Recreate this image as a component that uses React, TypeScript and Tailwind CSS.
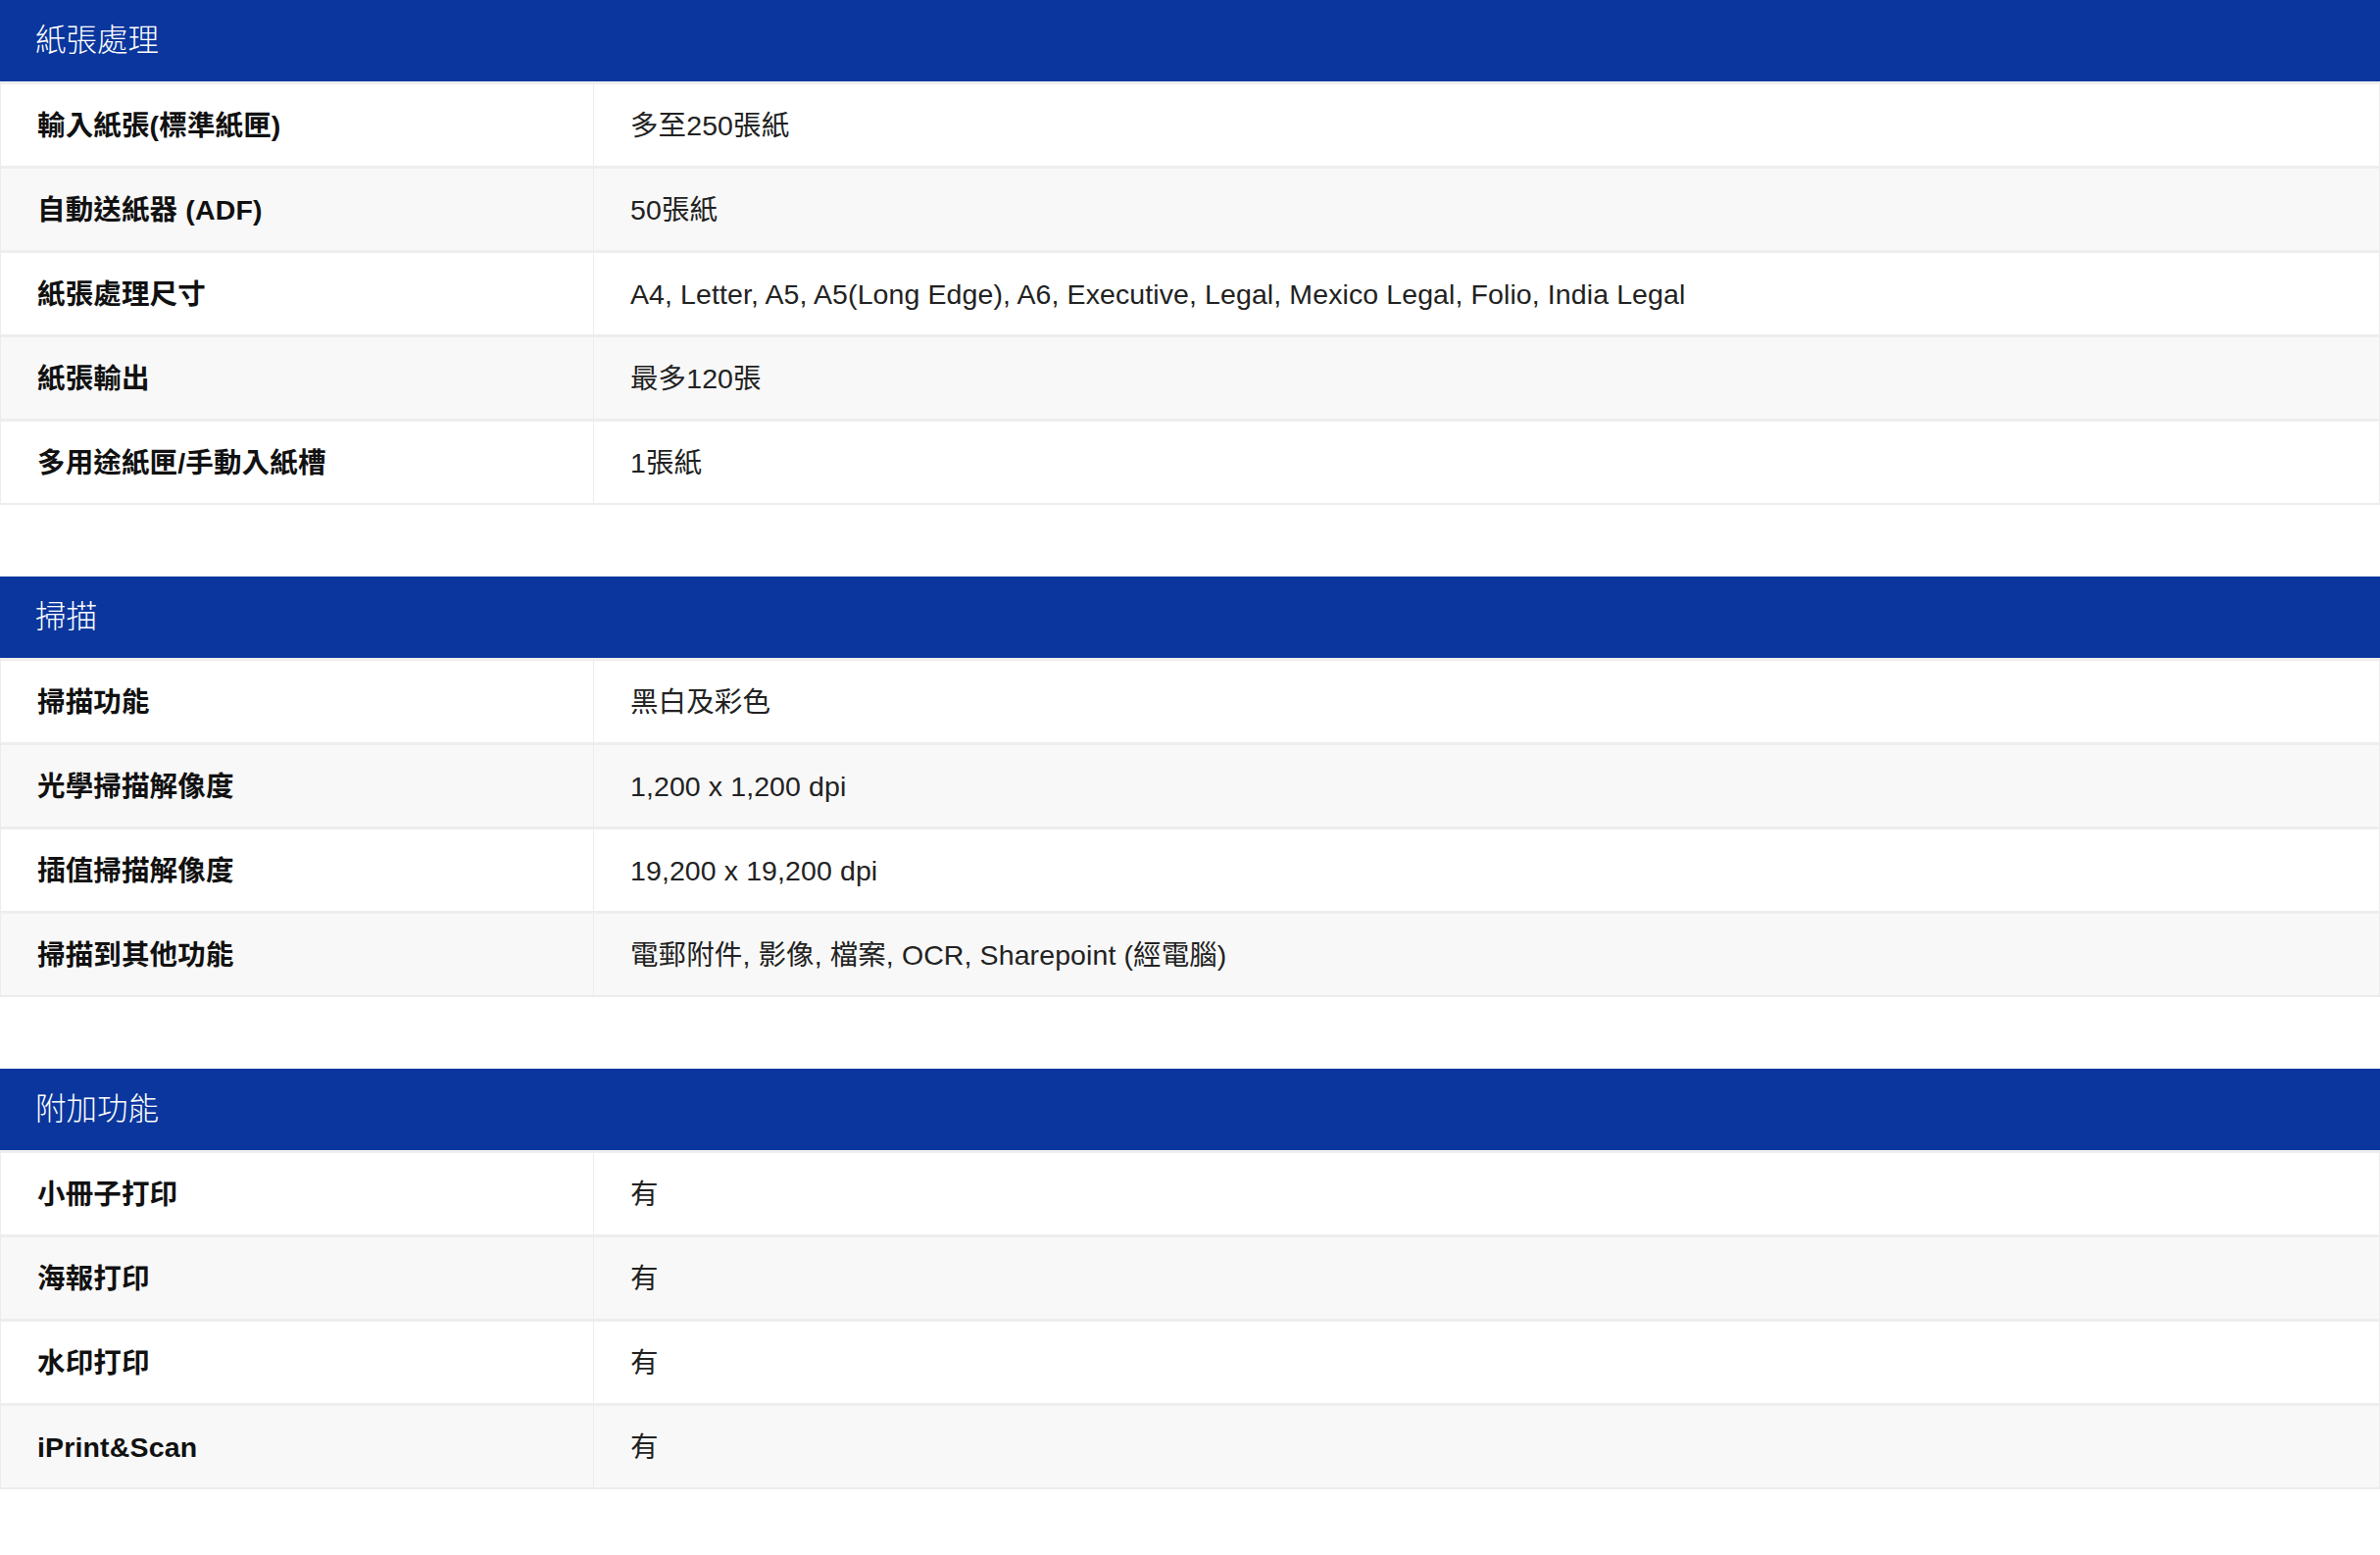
const sections = [
  {
    title: '紙張處理',
    rows: [
      ['輸入紙張(標準紙匣)', '多至250張紙'],
      ['自動送紙器 (ADF)', '50張紙'],
      ['紙張處理尺寸', 'A4, Letter, A5, A5(Long Edge), A6, Executive, Legal, Mexico Legal, Folio, India Legal'],
      ['紙張輸出', '最多120張'],
      ['多用途紙匣/手動入紙槽', '1張紙'],
    ],
  },
  {
    title: '掃描',
    rows: [
      ['掃描功能', '黑白及彩色'],
      ['光學掃描解像度', '1,200 x 1,200 dpi'],
      ['插值掃描解像度', '19,200 x 19,200 dpi'],
      ['掃描到其他功能', '電郵附件, 影像, 檔案, OCR, Sharepoint (經電腦)'],
    ],
  },
  {
    title: '附加功能',
    rows: [
      ['小冊子打印', '有'],
      ['海報打印', '有'],
      ['水印打印', '有'],
      ['iPrint&Scan', '有'],
    ],
  },
]

export default function App() {
  return (
    <main className="min-h-screen bg-white font-['Liberation_Sans','Noto_Sans_CJK_TC',sans-serif] text-[#1c1c1c]">
      {sections.map((section, i) => (
        <section key={i} className={i > 0 ? 'mt-[73px]' : ''}>
          {/* section header */}
          <div className="h-[83px] bg-[#0a369d] flex items-center pl-[36px] text-[31.5px] font-light text-white">
            {section.title}
          </div>

          <div className="border-l border-r border-b-2 border-[#ececec]">
            {section.rows.map(([label, value], idx) => (
              <div
                key={idx}
                className={`grid grid-cols-[605px_1fr] h-[86px] border-t-[3px] border-[#eeeeee] ${
                  idx % 2 === 1 ? 'bg-[#f8f8f8]' : 'bg-white'
                }`}
              >
                <div className="flex items-center pt-[2px] pl-[37px] border-r border-[#ececec] text-[28.5px] tracking-[0.15px] font-bold text-[#111]">
                  {label}
                </div>
                <div className="flex items-center pt-[2px] pl-[37px] text-[28.5px] tracking-[0.1px] text-[#222]">
                  {value}
                </div>
              </div>
            ))}
          </div>
        </section>
      ))}
    </main>
  )
}
